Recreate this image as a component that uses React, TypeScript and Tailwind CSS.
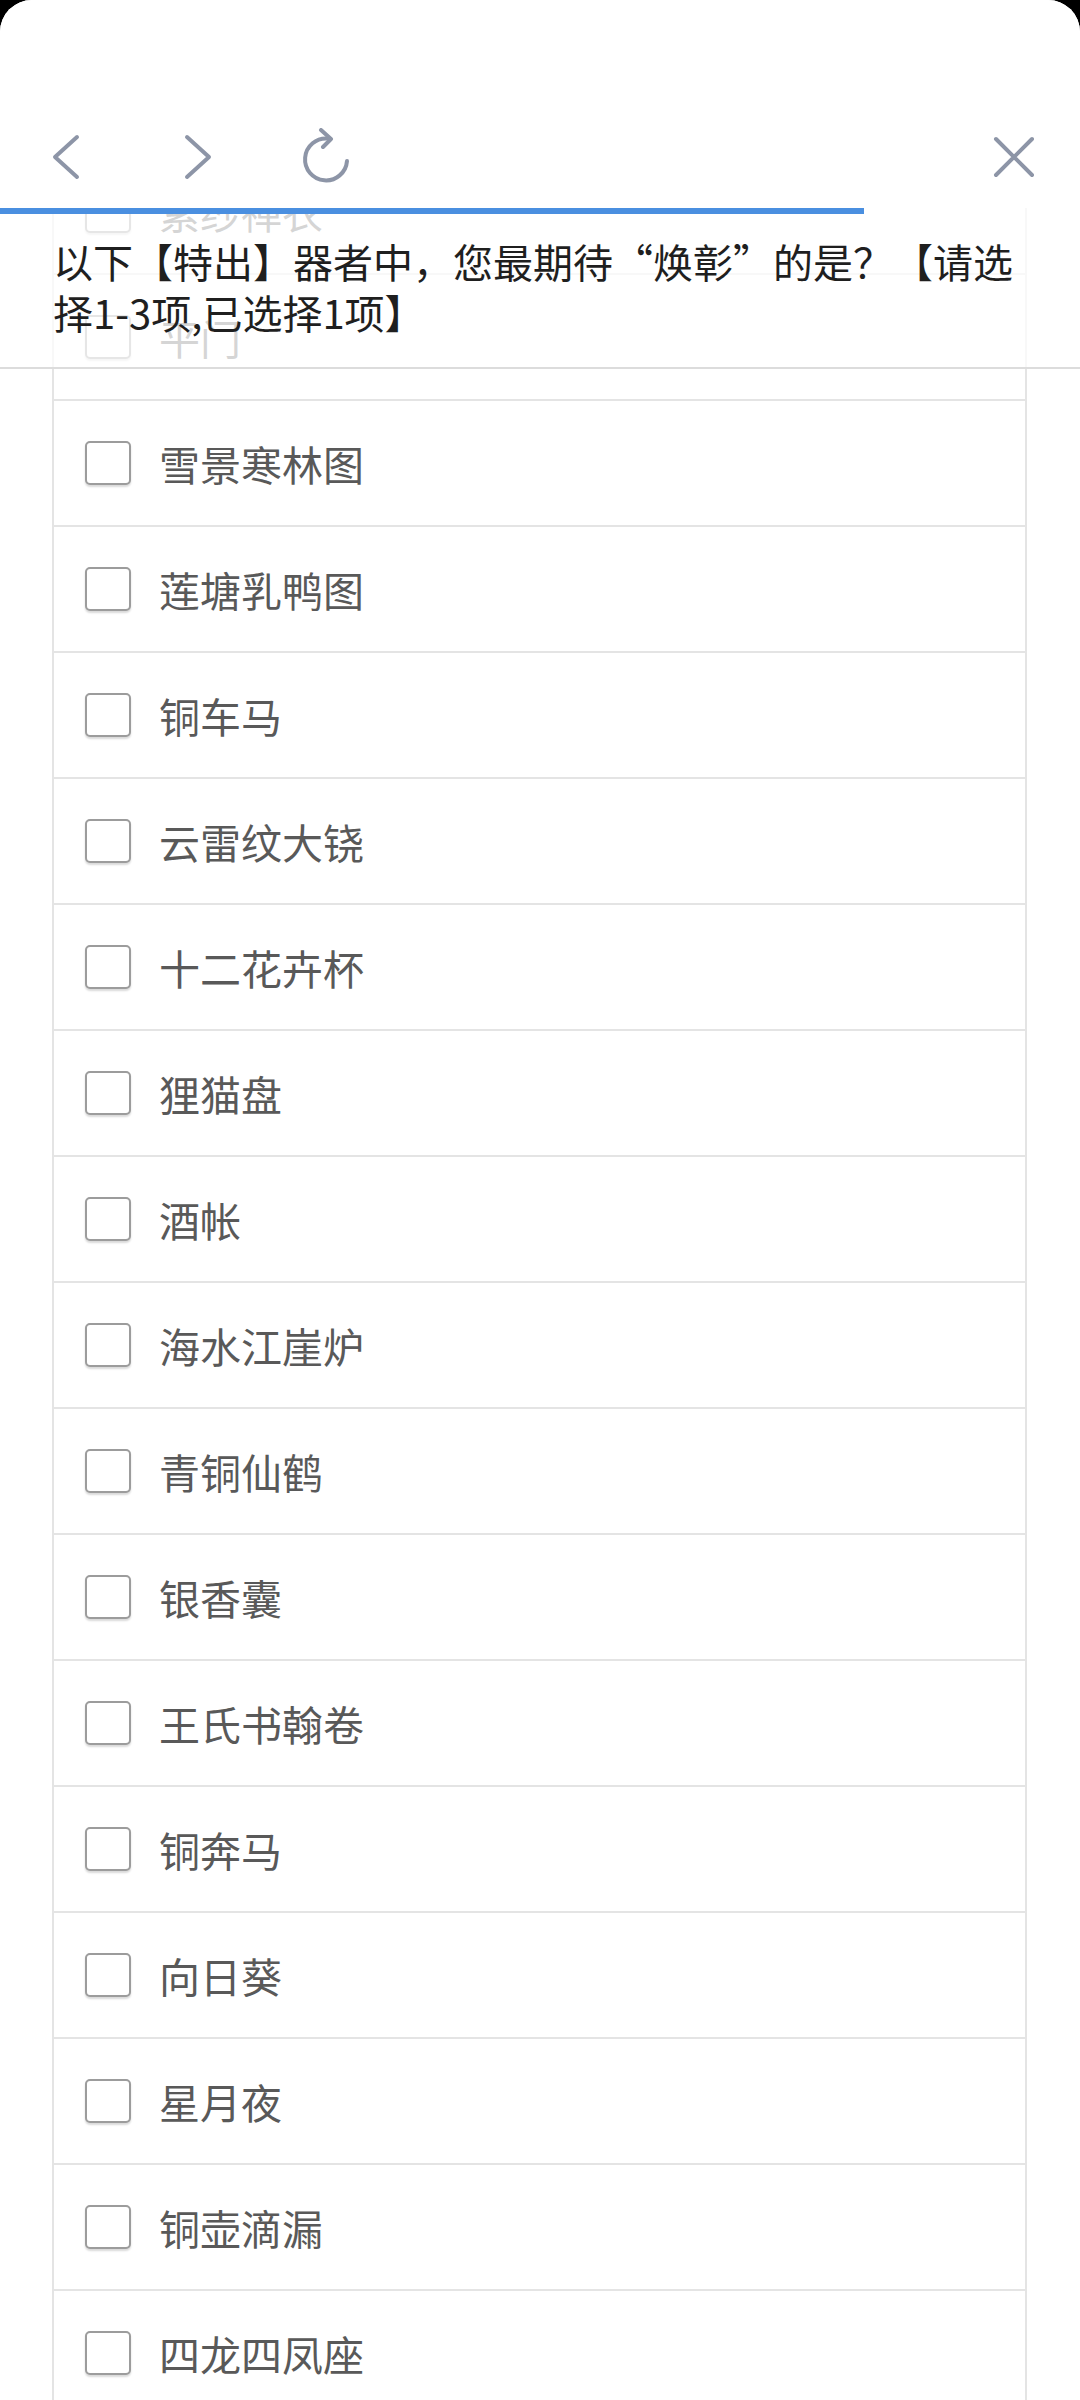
import React from 'react';

const options = [
  '素纱禅衣',
  '平门',
  '雪景寒林图',
  '莲塘乳鸭图',
  '铜车马',
  '云雷纹大铙',
  '十二花卉杯',
  '狸猫盘',
  '酒帐',
  '海水江崖炉',
  '青铜仙鹤',
  '银香囊',
  '王氏书翰卷',
  '铜奔马',
  '向日葵',
  '星月夜',
  '铜壶滴漏',
  '四龙四凤座',
];

function NavIcons() {
  return (
    <div className="flex h-[54px] items-center pt-[130px] box-content">
      <svg width="30" height="48" viewBox="0 0 30 48" className="ml-[51px]">
        <polyline points="26,4 4,24 26,44" fill="none" stroke="#8d95a7" strokeWidth="4" strokeLinecap="round" strokeLinejoin="round" />
      </svg>
      <svg width="30" height="48" viewBox="0 0 30 48" className="ml-[102px]">
        <polyline points="4,4 26,24 4,44" fill="none" stroke="#8d95a7" strokeWidth="4" strokeLinecap="round" strokeLinejoin="round" />
      </svg>
      <svg width="52" height="56" viewBox="0 0 52 56" className="ml-[88px] -mt-[2px]">
        <path d="M27 10.5 A21 21 0 1 0 46 33" fill="none" stroke="#8d95a7" strokeWidth="4" strokeLinecap="round" />
        <polyline points="20,2 30,11 22,19" fill="none" stroke="#8d95a7" strokeWidth="4" strokeLinecap="round" strokeLinejoin="round" />
      </svg>
      <svg width="42" height="42" viewBox="0 0 42 42" className="ml-auto mr-[45px]">
        <path d="M3 3 L39 39 M39 3 L3 39" fill="none" stroke="#8d95a7" strokeWidth="4" strokeLinecap="round" />
      </svg>
    </div>
  );
}

export default function App() {
  return (
    <div className="min-h-screen bg-black font-['Noto_Sans_CJK_SC',sans-serif]">
      <div className="relative h-[2400px] overflow-hidden rounded-t-[32px] bg-white">
        {/* option list (scrolled) */}
        <div className="ml-[52px] mt-[149px] w-[975px] border-x-2 border-[#e4e4e4]">
          {options.map((name) => (
            <div key={name} className="flex h-[126px] items-center border-b-2 border-[#e4e4e4] pl-[31px]">
              <span className="h-[44px] w-[46px] rounded-[5px] border-2 border-[#9c9c9c] bg-white shadow-[0_2px_2px_rgba(0,0,0,0.15)]"></span>
              <span className="ml-[28px] text-[41px] leading-[48px] text-[#595959]">{name}</span>
            </div>
          ))}
        </div>

        {/* top navigation */}
        <div className="absolute inset-x-0 top-0 h-[208px] bg-white">
          <NavIcons />
        </div>

        {/* question header */}
        <div className="absolute inset-x-0 top-[208px] h-[161px] border-b-2 border-[#dcdcdc] bg-white/75 pl-[53px] pr-[55px] pt-[28px]">
          <p className="text-[40px] leading-[51px] text-[#1f1f1f]">
            以下【特出】器者中，您最期待“焕彰”的是？【请选择1-3项,已选择1项】
          </p>
        </div>
        <div className="absolute left-0 top-[208px] h-[6px] w-[864px] bg-[#4a8fe0]"></div>
      </div>
    </div>
  );
}
